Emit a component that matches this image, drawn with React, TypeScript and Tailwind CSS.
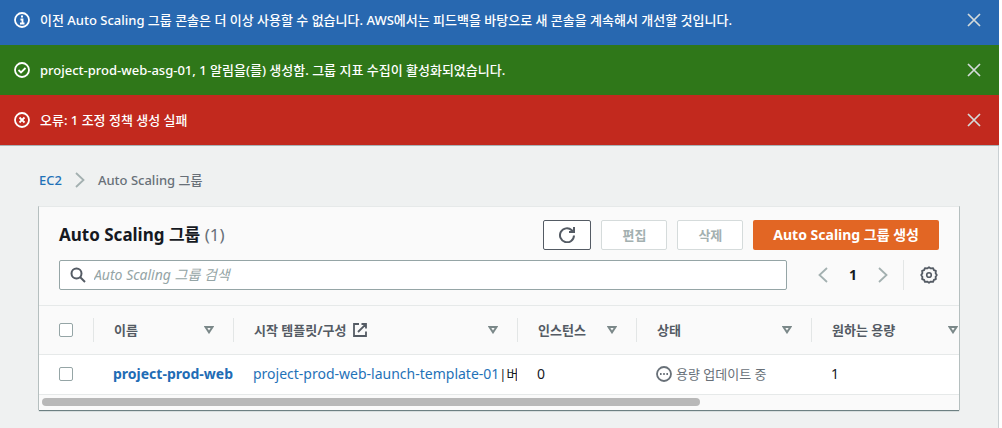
import type { ReactNode } from "react";

const notices = [
  {
    id: "info",
    box: "bg-[#2868b0] pt-[10px] pb-[15px]",
    text: "이전 Auto Scaling 그룹 콘솔은 더 이상 사용할 수 없습니다. AWS에서는 피드백을 바탕으로 새 콘솔을 계속해서 개선할 것입니다.",
    mark: <path d="M6.5 7.5H8.5V11.5M6 11.5H10.5M7 4.5H9" />,
  },
  {
    id: "success",
    box: "bg-[#2f7719] py-[15px]",
    text: "project-prod-web-asg-01, 1 알림을(를) 생성함. 그룹 지표 수집이 활성화되었습니다.",
    mark: <path d="M4.5 8L7 10.5L11.5 6" />,
  },
  {
    id: "error",
    box: "bg-[#c2291e] py-[15px]",
    text: "오류: 1 조정 정책 생성 실패",
    mark: <path d="M5.5 5.5L10.5 10.5M10.5 5.5L5.5 10.5" />,
  },
];

function CloseIcon() {
  return (
    <svg className="size-4" viewBox="0 0 16 16" fill="none" stroke="currentColor" strokeWidth="1.7">
      <path d="M2 2L14 14M14 2L2 14" />
    </svg>
  );
}

function Chevron({ left = false }: { left?: boolean }) {
  return (
    <svg className="size-4 text-[#a3b0b0]" viewBox="0 0 16 16" fill="none" stroke="currentColor" strokeWidth="1.8">
      <path d={left ? "M12 1L4.5 8L12 15" : "M4 1L11.5 8L4 15"} />
    </svg>
  );
}

function GearIcon() {
  return (
    <svg className="size-4.5" viewBox="0 0 18 18" fill="none" stroke="currentColor" strokeWidth="1.8">
      <path
        d="M7.2 2.4L9 1.2L10.8 2.4L13.1 2.1L13.9 4.1L15.9 4.9L15.6 7.2L16.8 9L15.6 10.8L15.9 13.1L13.9 13.9L13.1 15.9L10.8 15.6L9 16.8L7.2 15.6L4.9 15.9L4.1 13.9L2.1 13.1L2.4 10.8L1.2 9L2.4 7.2L2.1 4.9L4.1 4.1L4.9 2.1Z"
        strokeLinejoin="round"
      />
      <circle cx="9" cy="9" r="2.3" strokeWidth="1.6" />
    </svg>
  );
}

function ExternalIcon() {
  return (
    <svg className="size-3.5 shrink-0" viewBox="0 0 14 14" fill="none" stroke="currentColor" strokeWidth="1.8">
      <path d="M6 1H1V13H13V8.5M8.5 1H13V5.5M12.7 1.3L5 9" />
    </svg>
  );
}

function HeaderCell({ children }: { children: ReactNode }) {
  return (
    <th scope="col" className="h-12 p-0 text-left font-bold text-[#545b64]">
      <div className="flex h-6 items-center justify-between border-l border-[#e3e6e6] pr-[19px] pl-5">
        <span className="flex items-center gap-1.5 whitespace-nowrap">{children}</span>
        <svg className="h-2 w-2.5 shrink-0 text-[#7b8889]" viewBox="0 0 10 8" fill="none" stroke="currentColor" strokeWidth="2">
          <path d="M1.5 1H8.5L5 6.3Z" />
        </svg>
      </div>
    </th>
  );
}

function Checkbox({ label }: { label: string }) {
  return (
    <input
      type="checkbox"
      aria-label={label}
      className="ml-5 block size-3.5 appearance-none rounded-xs border border-[#95a5a6] bg-white"
    />
  );
}

export default function App() {
  return (
    <div className="min-h-screen bg-white pr-[3px] font-['Noto_Sans','Noto_Sans_CJK_KR',sans-serif] text-[13px] leading-5 text-[#16191f]">
      <div className="flex min-h-screen flex-col bg-[#eff1f1]">
        <div className="border-b border-[#a9b2b5] font-medium text-white">
          {notices.map((n) => (
            <div key={n.id} role="status" className={`flex items-center pr-[17px] pl-3.5 ${n.box}`}>
              <svg className="mr-2.5 size-4 shrink-0" viewBox="0 0 16 16" fill="none" stroke="currentColor" strokeWidth="1.8">
                <circle cx="8" cy="8" r="7" />
                {n.mark}
              </svg>
              <p className="flex-1">{n.text}</p>
              <button type="button" aria-label="닫기" className="text-[#d5dbdb]">
                <CloseIcon />
              </button>
            </div>
          ))}
        </div>

        <main className="flex-1 border-r border-[#c9d0d3] px-[39px] pt-6">
          <nav aria-label="탐색 경로" className="flex items-center gap-2.5 font-medium">
            <a href="#ec2" className="text-[#1f72b8]">EC2</a>
            <Chevron />
            <span className="text-[#687078]">Auto Scaling 그룹</span>
          </nav>

          <section className="mt-4 border-t border-[#e6e9e9] bg-[#fafafa] shadow-[0_1px_1px_#6d8082,-1px_0_0_#c5cccc,1px_0_0_#c5cccc]">
            <div className="px-5 pt-[13px] pb-[15px]">
              <div className="flex items-center gap-2.5">
                <h1 className="mr-auto text-[17px] font-bold">
                  Auto Scaling 그룹 <span className="font-normal text-[#687078]">(1)</span>
                </h1>
                <button
                  type="button"
                  aria-label="새로 고침"
                  className="flex h-[30px] w-12 items-center justify-center rounded-xs border border-[#545b64] bg-white text-[#545b64]"
                >
                  <svg className="size-4" viewBox="0 0 16 16" fill="none" stroke="currentColor" strokeWidth="2">
                    <path d="M15 8.5A7 7 0 1 1 12.8 3.2L14 5M15 0V5H10" />
                  </svg>
                </button>
                <button type="button" disabled className="h-[30px] rounded-xs border border-[#d5dbdb] bg-white px-5 font-bold text-[#a3b0b0]">
                  편집
                </button>
                <button type="button" disabled className="h-[30px] rounded-xs border border-[#d5dbdb] bg-white px-5 font-bold text-[#a3b0b0]">
                  삭제
                </button>
                <button type="button" className="h-[30px] rounded-xs bg-[#e26624] px-5 text-sm font-bold text-white">
                  Auto Scaling 그룹 생성
                </button>
              </div>

              <div className="mt-2.5 flex items-center pr-px">
                <label className="flex h-[30px] flex-1 items-center gap-2 rounded-xs border border-[#95a5a6] bg-white px-2.5">
                  <svg className="size-4 shrink-0 text-[#545b64]" viewBox="0 0 16 16" fill="none" stroke="currentColor" strokeWidth="2">
                    <circle cx="6.5" cy="6.5" r="5" />
                    <path d="M10 10L15 15" />
                  </svg>
                  <input
                    type="search"
                    aria-label="Auto Scaling 그룹 검색"
                    placeholder="Auto Scaling 그룹 검색"
                    className="w-full text-sm outline-none placeholder:text-[#95a5a6] placeholder:italic"
                  />
                </label>
                <div className="ml-7 flex items-center gap-4">
                  <button type="button" aria-label="이전 페이지"><Chevron left /></button>
                  <button type="button" className="w-3 text-center text-sm font-bold">1</button>
                  <button type="button" aria-label="다음 페이지"><Chevron /></button>
                </div>
                <div className="ml-3 flex h-[30px] items-center border-l border-[#e3e6e6] pl-4">
                  <button type="button" aria-label="기본 설정" className="text-[#545b64]">
                    <GearIcon />
                  </button>
                </div>
              </div>
            </div>

            <div className="overflow-hidden border-y border-[#e6e9e9]">
              <table className="w-full min-w-[938px] table-fixed border-collapse">
                <colgroup>
                  <col className="w-[54px]" />
                  <col className="w-[140px]" />
                  <col className="w-[284px]" />
                  <col className="w-[119px]" />
                  <col className="w-[175px]" />
                  <col />
                </colgroup>
                <thead>
                  <tr className="border-b border-[#e6e9e9]">
                    <th className="p-0"><Checkbox label="모두 선택" /></th>
                    <HeaderCell>이름</HeaderCell>
                    <HeaderCell>시작 템플릿/구성 <ExternalIcon /></HeaderCell>
                    <HeaderCell>인스턴스</HeaderCell>
                    <HeaderCell>상태</HeaderCell>
                    <HeaderCell>원하는 용량</HeaderCell>
                  </tr>
                </thead>
                <tbody>
                  <tr className="h-10 bg-white text-sm whitespace-nowrap">
                    <td className="p-0"><Checkbox label="project-prod-web 선택" /></td>
                    <td className="p-0 pl-5">
                      <a href="#group" className="font-bold text-[#1f6cb5]">project-prod-web</a>
                    </td>
                    <td className="p-0 pl-5">
                      <div className="flex items-center overflow-hidden">
                        <a href="#template" className="text-[#1f72b8]">project-prod-web-launch-template-01</a>
                        <span className="text-[13px]">|</span>
                        <span className="text-[13px]">버</span>
                      </div>
                    </td>
                    <td className="p-0 pl-5">0</td>
                    <td className="p-0 pl-5 text-[13px]">
                      <span className="flex items-center gap-1 text-[#687078]">
                        <svg className="size-4" viewBox="0 0 16 16" fill="none" stroke="currentColor" strokeWidth="1.8">
                          <circle cx="8" cy="8" r="7" />
                          <path d="M4 8H5.6M7.2 8H8.8M10.4 8H12" />
                        </svg>
                        용량 업데이트 중
                      </span>
                    </td>
                    <td className="p-0 pl-5">1</td>
                  </tr>
                </tbody>
              </table>
            </div>
            {/* horizontal scroll track */}
            <div className="px-[3px] pt-[3px] pb-1">
              <div className="h-2 w-[72%] rounded-full bg-[#b8b8b8]" />
            </div>
          </section>
        </main>
      </div>
    </div>
  );
}
